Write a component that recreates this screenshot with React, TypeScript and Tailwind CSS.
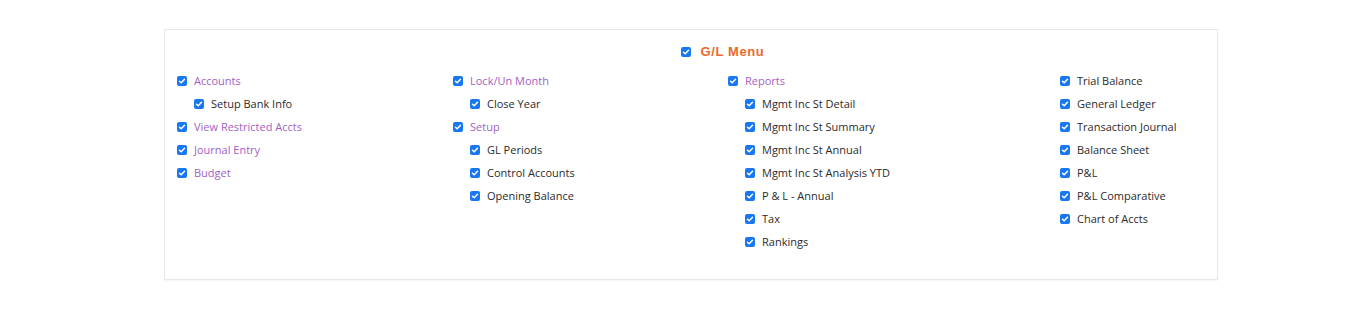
import React from 'react';

type Item = { label: string; top?: boolean; children?: string[] };

const columns: Item[][] = [
  [
    { label: 'Accounts', top: true, children: ['Setup Bank Info'] },
    { label: 'View Restricted Accts', top: true },
    { label: 'Journal Entry', top: true },
    { label: 'Budget', top: true },
  ],
  [
    { label: 'Lock/Un Month', top: true, children: ['Close Year'] },
    { label: 'Setup', top: true, children: ['GL Periods', 'Control Accounts', 'Opening Balance'] },
  ],
  [
    {
      label: 'Reports',
      top: true,
      children: [
        'Mgmt Inc St Detail',
        'Mgmt Inc St Summary',
        'Mgmt Inc St Annual',
        'Mgmt Inc St Analysis YTD',
        'P & L - Annual',
        'Tax',
        'Rankings',
      ],
    },
  ],
  [
    { label: 'Trial Balance' },
    { label: 'General Ledger' },
    { label: 'Transaction Journal' },
    { label: 'Balance Sheet' },
    { label: 'P&L' },
    { label: 'P&L Comparative' },
    { label: 'Chart of Accts' },
  ],
];

const Check: React.FC = () => (
  <span className="flex h-[10px] w-[10px] shrink-0 items-center justify-center rounded-[2px] bg-[#1877f2]">
    <svg width="8" height="8" viewBox="0 0 8 8" fill="none">
      <path d="M1.5 4.2 L3.2 5.8 L6.5 2.2" stroke="white" strokeWidth="1.5" strokeLinecap="round" strokeLinejoin="round" />
    </svg>
  </span>
);

const Row: React.FC<{ label: string; purple?: boolean; nested?: boolean }> = ({ label, purple, nested }) => (
  <div className={`flex h-[23px] items-center gap-[7px] ${nested ? 'pl-[17px]' : ''}`}>
    <Check />
    <span className={purple ? 'text-[#a35fc4]' : 'text-[#2b2b2b]'}>{label}</span>
  </div>
);

const App: React.FC = () => {
  return (
    <div className="h-[312px] w-[1372px] bg-white pt-[29px] font-['Open_Sans',sans-serif] text-[11px]">
      <div className="ml-[164px] h-[251px] w-[1054px] border border-[#e8e8e8] px-[12px] pt-[12px] shadow-[0_1px_1px_rgba(0,0,0,0.03)]">
        <div className="flex items-center justify-center gap-[10px] pl-[63px]">
          <Check />
          <span className="font-['Liberation_Sans',sans-serif] text-[13px] font-bold tracking-[0.6px] text-[#ec6a2c]">G/L Menu</span>
        </div>
        <div className="mt-[8px] grid grid-cols-[276px_275px_332px_1fr]">
          {columns.map((col, ci) => (
            <div key={ci} className="flex flex-col">
              {col.map((item) => (
                <React.Fragment key={item.label}>
                  <Row label={item.label} purple={item.top} />
                  {item.children?.map((c) => (
                    <Row key={c} label={c} nested />
                  ))}
                </React.Fragment>
              ))}
            </div>
          ))}
        </div>
      </div>
    </div>
  );
};

export default App;
